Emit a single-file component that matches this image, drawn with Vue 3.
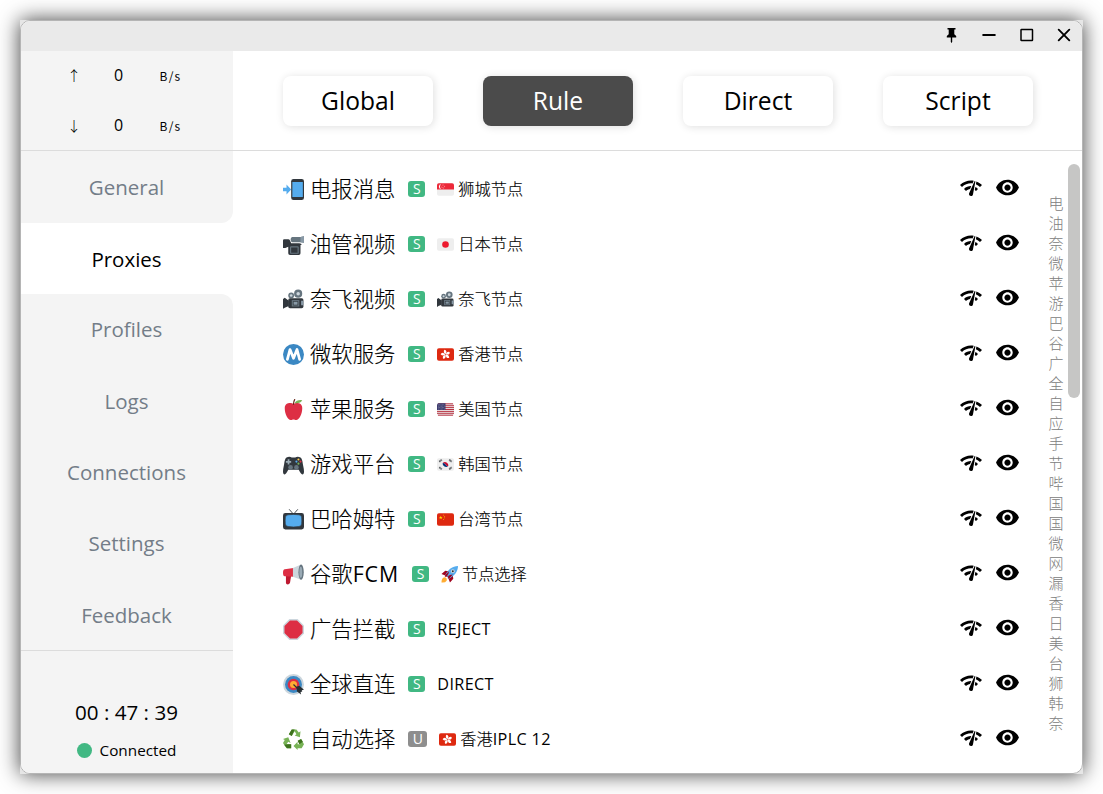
<script setup>
const modes = ['Global', 'Rule', 'Direct', 'Script']
const menu = ['General', 'Proxies', 'Profiles', 'Logs', 'Connections', 'Settings', 'Feedback']
const rows = [
  { icon: 'phone', name: '电报消息', tag: 'S', flag: 'sg', node: '狮城节点' },
  { icon: 'video', name: '油管视频', tag: 'S', flag: 'jp', node: '日本节点' },
  { icon: 'movie', name: '奈飞视频', tag: 'S', flag: 'movie', node: '奈飞节点' },
  { icon: 'metro', name: '微软服务', tag: 'S', flag: 'hk', node: '香港节点' },
  { icon: 'apple', name: '苹果服务', tag: 'S', flag: 'us', node: '美国节点' },
  { icon: 'game', name: '游戏平台', tag: 'S', flag: 'kr', node: '韩国节点' },
  { icon: 'tv', name: '巴哈姆特', tag: 'S', flag: 'cn', node: '台湾节点' },
  { icon: 'horn', name: '谷歌FCM', tag: 'S', flag: 'rocket', node: '节点选择' },
  { icon: 'stop', name: '广告拦截', tag: 'S', flag: '', node: 'REJECT' },
  { icon: 'target', name: '全球直连', tag: 'S', flag: '', node: 'DIRECT' },
  { icon: 'recycle', name: '自动选择', tag: 'U', flag: 'hk', node: '香港IPLC 12' }
]
const index = [...'电油奈微苹游巴谷广全自应手节哔国国微网漏香日美台狮韩奈']

// Splits a label into runs of Latin and Han characters, which are set in different weights
const runs = (s) => s.match(/[A-Z0-9 ]+|[^A-Z0-9 ]+/g)
const isLatin = (s) => /^[A-Z0-9 ]/.test(s)
</script>

<template>
  <div class="desktop">
    <svg class="defs" width="0" height="0">
      <symbol id="phone" viewBox="0 0 36 36">
        <path fill="#31373D" d="M14 4a4 4 0 0 1 4-4h14a4 4 0 0 1 4 4v28a4 4 0 0 1-4 4H18a4 4 0 0 1-4-4z" />
        <path fill="#55ACEE" d="M16 5h18v26H16zM0 15h6V9.5L14 18l-8 8.500V21H0z" />
      </symbol>
      <symbol id="video" viewBox="0 0 36 36">
        <path fill="#66757F" d="M16 5h14l6-1v11l-6-1H16q-3 0-3-4.500T16 5z" />
        <path fill="#8899A6" d="M30 5l6-1v11l-6-1z" />
        <path fill="#31373D" d="M0 11q0-2 2-2h7q2 0 3 2l2 5h14q4 0 4 3h-2v14q0 3-3 3H12q-3 0-3-3v-11l-5 2H0z" />
        <path fill="#66757F" d="M12 23q0-2 2-2h11q2 0 2 2v9q0 2-2 2H14q-2 0-2-2z" />
        <path fill="#31373D" d="M14 23h11v9H14z" />
      </symbol>
      <symbol id="movie" viewBox="0 0 36 36">
        <path fill="#31373D" d="M0 17l3-2 7 5v9l-7 3-3 2z" />
        <circle cx="14" cy="11" r="5" fill="#66757F" /><circle cx="26" cy="8" r="7" fill="#66757F" />
        <path fill="#31373D" d="M12 16h20q3 0 3 3v11q0 3-3 3H12q-3 0-3-3V19q0-3 3-3z" />
        <path fill="#66757F" d="M15 19h13v11H15z" /><path fill="#292F33" d="M17 21h9v7h-9z" />
        <circle cx="14" cy="11" r="2.200" fill="#CCD6DD" /><circle cx="26" cy="8" r="3" fill="#CCD6DD" />
        <path fill="#8899A6" d="M18 22h7v5h-7zM31 20h4v8h-4z" />
      </symbol>
      <symbol id="metro" viewBox="0 0 36 36">
        <circle cx="18" cy="18" r="18" fill="#3B88C3" />
        <path fill="none" stroke="#fff" stroke-width="4.700" stroke-linecap="round" stroke-linejoin="round" d="M7.500 26.500l4.500-17 6 15 6-15 4.500 17" />
      </symbol>
      <symbol id="apple" viewBox="0 0 36 36">
        <path fill="#DD2E44" d="M24 7c-3 0-3 1-6 1s-3-1-6-1c-4 0-9 2-9 9 0 11 6 20 10 20 3 0 3-1 5-1s2 1 5 1c4 0 10-9 10-20 0-7-5-9-9-9z" />
        <path fill="none" stroke="#662113" stroke-width="2" stroke-linecap="round" d="M18 9q0-5 2-8" />
        <path fill="#77B255" d="M20 7q3-6 13-5-3 6-13 5z" />
      </symbol>
      <symbol id="game" viewBox="0 0 36 36">
        <path fill="#31373D" d="M6 6q5-3 9 0h6q4-3 9 0 3 2 4 11 2 9 2 13 0 5-3 5-2 0-6-8H9q-4 8-6 8-3 0-3-5 0-4 2-13Q3 8 6 6z" />
        <circle cx="13" cy="23" r="4" fill="#66757F" /><circle cx="23" cy="23" r="4" fill="#66757F" />
        <path fill="#9AAAB4" d="M8 9h3v3h3v3h-3v3H8v-3H5v-3h3z" />
        <circle cx="26.500" cy="9.500" r="1.800" fill="#FFCC4D" /><circle cx="23" cy="13" r="1.800" fill="#55ACEE" />
        <circle cx="30" cy="13" r="1.800" fill="#DD2E44" /><circle cx="26.500" cy="16.500" r="1.800" fill="#77B255" />
      </symbol>
      <symbol id="tv" viewBox="0 0 36 36">
        <path fill="none" stroke="#31373D" stroke-width="1.500" stroke-linecap="round" d="M18 9L11 1M18 9l7-8" />
        <path fill="#31373D" d="M4 7h28q4 0 4 4v20q0 4-4 4H4q-4 0-4-4V11q0-4 4-4z" />
        <path fill="#55ACEE" stroke="#31373D" d="M9 10q9-1.500 18 0 5 0 5 5 .5 6 0 10 0 5-5 5-9 1.500-18 0-5 0-5-5-.5-5 0-10 0-5 5-5z" />
      </symbol>
      <symbol id="horn" viewBox="0 0 36 36">
        <path fill="#BE1931" d="M5 20h9l-2 12q-1 3-4 3-3 0-3-3z" />
        <path fill="#DD2E44" d="M3 9l15-2v15L3 21q-3 0-3-6 0-6 3-6z" />
        <path fill="#CCD6DD" d="M17 7L31 1q4 3 4 13t-4 13l-14-5z" />
        <ellipse cx="31" cy="14" rx="4.500" ry="13" fill="#66757F" /><ellipse cx="30.500" cy="14" rx="2.500" ry="9.500" fill="#99AAB5" />
      </symbol>
      <symbol id="stop" viewBox="0 0 36 36">
        <path fill="#CCD6DD" d="M11 0h14l11 11v14L25 36H11L0 25V11z" />
        <path fill="#DD2E44" d="M12 2.500h12l9.500 9.500v12L24 33.500H12L2.500 24V12z" />
      </symbol>
      <symbol id="target" viewBox="0 0 36 36">
        <circle cx="18" cy="18" r="18" fill="#CCD6DD" /><circle cx="18" cy="18" r="14.500" fill="#3B88C3" />
        <circle cx="18" cy="18" r="10" fill="#DD2E44" /><circle cx="18" cy="18" r="6" fill="#FFAC33" />
        <path stroke="#292F33" stroke-width="2" d="M18 18l10 10" />
        <path fill="#292F33" d="M23 22l5-2 8 7-4 1 1 2-3 1 1 4-7-5z" />
      </symbol>
      <symbol id="recycle" viewBox="0 0 36 36">
        <path fill="#77B255" d="M10 9l5-8h8l4 5 3-2-1 10-9-3 3-2-3-5-5 8zM9 14l4 10-4-2-3 4h8v7H6l-6-9 3-5-3-2zM31 17l5 9-4 7h-7v3l-7-7 7-7v4h4l-3-6z" />
        <path fill="#3E721D" d="M10 9l5-8h5l-5 11zM8 26h6v7H7l-5-6zM25 20l6-3 3 5-6 4z" />
      </symbol>
      <symbol id="rocket" viewBox="0 0 36 36">
        <path fill="#A0041E" d="M1 17l8-7 7 1-7 9zM19 35l7-8-1-7-9 7z" />
        <path fill="#FFAC33" d="M1 35q0-11 8-11 5 3 3 7-3 5-11 4z" />
        <path fill="#55ACEE" d="M36 0c-12 0-21 8-27 19l8 8C28 21 36 12 36 0z" />
        <path fill="#A0041E" d="M9 19l8-8-1 5-4 7 7-4 6-1-8 9-3-1 2-4-8 1z" />
        <circle cx="25" cy="11" r="4" fill="#CCD6DD" /><circle cx="25" cy="11" r="2" fill="#292F33" />
      </symbol>
      <symbol id="sg" viewBox="0 0 36 36">
        <rect y="5" width="36" height="26" rx="4" fill="#EEE" /><path fill="#ED2939" d="M4 5h28q4 0 4 4v9H0V9q0-4 4-4z" />
        <path fill="#fff" d="M9 7a5 5 0 1 0 0 10 6 6 0 0 1 0-10z" /><path fill="none" stroke="#fff" stroke-width="1.500" stroke-dasharray="1.500 2.500" d="M13 8l3 3-1.500 4H11l-1-4z" />
      </symbol>
      <symbol id="jp" viewBox="0 0 36 36">
        <rect y="5" width="36" height="26" rx="4" fill="#EEE" /><circle cx="18" cy="18" r="7" fill="#ED1B2F" />
      </symbol>
      <symbol id="hk" viewBox="0 0 36 36">
        <rect y="5" width="36" height="26" rx="4" fill="#DE2910" />
        <g fill="#fff">
          <path v-for="k in 5" :key="k" :transform="`rotate(${k * 72} 18 18)`" d="M17.500 17.500q-5-4-2-9.500 3.500 0 4.500 3.500 0 3-2.500 6z" />
        </g>
      </symbol>
      <symbol id="us" viewBox="0 0 36 36">
        <rect y="5" width="36" height="26" rx="4" fill="#EEE" />
        <path stroke="#B22334" stroke-width="2" d="M2 6h32M0 10h36M0 14h36M0 18h36M0 22h36M0 26h36M2 30h32" />
        <path fill="#3C3B6E" d="M4 5h14v14H0V9q0-4 4-4z" />
        <path stroke="#fff" stroke-width="1" stroke-dasharray="1 2" d="M2 8h15M3 11h14M2 14h15M3 17h14" />
      </symbol>
      <symbol id="kr" viewBox="0 0 36 36">
        <rect y="5" width="36" height="26" rx="4" fill="#EEE" />
        <path fill="#C60C30" d="M12 15a7 7 0 0 1 12 6q-3 2-6-3-3-4-6-3z" /><path fill="#003478" d="M12 15q3-1 6 3 3 5 6 3a7 7 0 0 1-12-6z" />
        <path stroke="#292F33" stroke-width="4" stroke-dasharray="1.200 .7" d="M5 12l5-4M26 8l5 4M5 24l5 4M26 28l5-4" />
      </symbol>
      <symbol id="cn" viewBox="0 0 36 36">
        <rect y="5" width="36" height="26" rx="4" fill="#DE2910" />
        <path fill="#FFDE02" d="M8 10l1 2.700h3l-2.400 1.800 1 2.900L8 15.600l-2.600 1.800 1-2.900L4 12.700h3zM13 8h1.500v1.500H13zM15.500 11H17v1.500h-1.500zM15.500 14H17v1.500h-1.500zM13 17h1.500v1.500H13z" />
      </symbol>
    </svg>

    <div class="frame">
      <div class="window">
        <header class="titlebar">
          <svg viewBox="0 0 20 20"><path d="M5.500 3h8v1.600h-1.200v4.700l1.900 1.700v1.500h-4V17l-.7 1-.7-1v-4.500h-4V11l1.900-1.700V4.600H5.500z" /></svg>
          <svg viewBox="0 0 20 20"><path class="line" d="M4.200 10h11.600" stroke-width="2" /></svg>
          <svg viewBox="0 0 20 20"><rect class="line" x="4" y="4.500" width="11.500" height="11" rx=".5" stroke-width="1.500" /></svg>
          <svg viewBox="0 0 20 20"><path class="line" d="M4.700 4.700l10.600 10.600M15.300 4.700L4.700 15.300" stroke-width="1.900" /></svg>
        </header>
        <div class="body">
          <aside>
            <div class="traffic">
              <div class="speed"><span class="arrow">↑</span><span class="num">0</span><span class="unit">B/s</span></div>
              <div class="speed"><span class="arrow">↓</span><span class="num">0</span><span class="unit">B/s</span></div>
            </div>
            <nav>
              <div v-for="(m, i) in menu" :key="m" class="item" :class="{ active: i === 1, above: i === 0, below: i === 2 }"><span>{{ m }}</span></div>
            </nav>
            <div class="status">
              <div class="clock">00 : 47 : 39</div>
              <div class="conn"><i></i><span>Connected</span></div>
            </div>
          </aside>
          <main>
            <div class="modes">
              <div v-for="m in modes" :key="m" class="mode" :class="{ on: m === 'Rule' }">{{ m }}</div>
            </div>
            <div class="content">
              <div class="list">
                <div v-for="r in rows" :key="r.name" class="row">
                  <svg class="emoji"><use :href="'#' + r.icon" /></svg>
                  <span class="name"><span v-for="t in runs(r.name)" :key="t" :class="{ latin: isLatin(t) }">{{ t }}</span></span>
                  <span class="tag" :class="{ auto: r.tag === 'U' }">{{ r.tag }}</span>
                  <svg v-if="r.flag" class="flag"><use :href="'#' + r.flag" /></svg>
                  <span class="node"><span v-for="t in runs(r.node)" :key="t" :class="{ latin: isLatin(t) }">{{ t }}</span></span>
                  <svg class="check" viewBox="0 0 24 24"><path d="M15.900 5c-.17 0-.32.09-.41.23l-.07.15-5.180 11.650c-.16.29-.26.61-.26.96 0 1.110.9 2.010 2.010 2.010.96 0 1.770-.68 1.960-1.590l.01-.03L16.400 5.500c0-.28-.22-.5-.5-.5zM1 9l2 2c2.880-2.880 6.790-4.080 10.530-3.620l1.190-2.680C9.890 3.840 4.740 5.270 1 9zm20 2l2-2c-1.640-1.640-3.550-2.820-5.590-3.570l-.53 2.820c1.500.62 2.900 1.530 4.120 2.750zm-4 4l2-2c-.8-.8-1.700-1.420-2.660-1.890l-.55 2.920c.42.27.83.59 1.210.97zM5 13l2 2c1.130-1.130 2.560-1.790 4.030-2l1.280-2.880c-2.630-.08-5.300.87-7.310 2.880z" /></svg>
                  <svg class="eye" viewBox="0 0 24 24"><path d="M12 4.500C7 4.500 2.730 7.610 1 12c1.730 4.390 6 7.500 11 7.500s9.270-3.110 11-7.500c-1.730-4.390-6-7.500-11-7.500zM12 17c-2.760 0-5-2.240-5-5s2.240-5 5-5 5 2.240 5 5-2.240 5-5 5zm0-8c-1.660 0-3 1.340-3 3s1.340 3 3 3 3-1.340 3-3-1.340-3-3-3z" /></svg>
                </div>
              </div>
              <div class="index"><span v-for="(c, i) in index" :key="i">{{ c }}</span></div>
              <div class="scroll"></div>
            </div>
          </main>
        </div>
      </div>
    </div>
  </div>
</template>

<style>
body { margin: 0; background: #fff; overflow: hidden; }
</style>

<style scoped>
* { box-sizing: border-box; }
.desktop { width: 1103px; height: 794px; padding: 20px; overflow: hidden; background: #fff; font-family: "Open Sans", "Noto Sans CJK SC", sans-serif; color: #000; }
.defs { display: block; height: 0; }
.frame { width: 1063px; height: 754px; background: #e6e6e6; box-shadow: 0 0 20px rgba(0, 0, 0, .75); }
.window { width: 1063px; height: 754px; border: 1px solid #b5b5b5; border-radius: 10px; overflow: hidden; background: #fff; display: flex; flex-direction: column; }
.titlebar { height: 30px; background: #eaeaea; display: flex; justify-content: flex-end; align-items: center; gap: 17.500px; padding: 0 8px 2px 0; flex: none; }
.titlebar svg { width: 20px; height: 20px; display: block; }
.line { fill: none; stroke: #000; stroke-linecap: round; }
.body { flex: 1; display: flex; min-height: 0; }
aside { width: 212px; flex: none; background: #f4f4f4; display: flex; flex-direction: column; }
.traffic { height: 100px; border-bottom: 1px solid #dcdcdc; flex: none; }
.speed { height: 50px; display: grid; grid-template-columns: 44px 45px 59px; padding: 0 0 2px 31px; align-items: center; text-align: center; }
.arrow { font: 300 14px "Noto Sans CJK SC", sans-serif; }
.num { font-size: 16px; }
.unit { font: 12px "Noto Sans CJK SC", sans-serif; letter-spacing: 1.200px; }
nav { height: 499px; flex: none; display: flex; flex-direction: column; background: #fff; }
.item { flex: 1; display: flex; align-items: center; justify-content: center; background: #f4f4f4; color: #737d88; font-size: 20.500px; padding: 1px 1px 0 0; }
.item.active { background: #fff; color: #000; flex: 0 0 71px; }
.item.above { border-bottom-right-radius: 12px; flex: 0 0 72px; padding-top: 0; }
.item.below { border-top-right-radius: 12px; padding-top: 0; }
.status { flex: 1; border-top: 1px solid #dcdcdc; display: flex; flex-direction: column; align-items: center; padding: 45px 1px 0 0; }
.clock { font-size: 20.600px; line-height: 32px; }
.conn { display: flex; align-items: center; gap: 8px; font-size: 15.300px; line-height: 20px; margin-top: 12px; }
.conn i { width: 15px; height: 15px; border-radius: 50%; background: #41b883; }
main { flex: 1; display: flex; flex-direction: column; min-width: 0; }
.modes { height: 100px; flex: none; border-bottom: 1px solid #dcdcdc; display: flex; gap: 50px; padding: 25px 0 0 50px; }
.mode { width: 150px; height: 50px; border-radius: 8px; display: flex; align-items: center; justify-content: center; font-size: 24.600px; padding-bottom: 2px; box-shadow: 1px 1px 8px rgba(0, 0, 0, .13); background: #fff; }
.mode.on { background: #4b4b4b; color: #fff; }
.content { flex: 1; display: flex; min-height: 0; padding-top: 11px; }
.list { width: 787px; padding-left: 50px; flex: none; }
.row { height: 55px; display: flex; align-items: center; }
.emoji { width: 21px; height: 21px; margin-right: 6px; flex: none; }
.name { font-size: 21.330px; font-weight: 300; line-height: 30px; padding-bottom: 2px; -webkit-text-stroke: .15px #000; }
.latin { font-weight: 400; letter-spacing: .35px; -webkit-text-stroke: 0; }
.name .latin { letter-spacing: .9px; }
.tag { width: 17px; height: 16px; border-radius: 3px; background: #41b883; color: #fff; font-size: 14px; line-height: 16px; text-align: center; margin: 0 12px 1px 13px; flex: none; }
.tag.auto { background: #8e8e8e; width: 19px; }
.flag { width: 17px; height: 17px; margin-right: 4px; flex: none; }
.node { font-size: 16.200px; font-weight: 300; line-height: 24px; padding-bottom: 2px; -webkit-text-stroke: .15px #000; }
.check { width: 24px; height: 24px; margin-left: auto; margin-bottom: 3px; }
.eye { width: 25px; height: 25px; margin: 0 0 4px 12.500px; }
.index { width: 24px; margin-left: 24px; padding-top: 31px; display: flex; flex-direction: column; align-items: center; flex: none; }
.index span { height: 20px; line-height: 20px; font-size: 15px; font-weight: 300; color: #808080; }
.scroll { margin: 2px 2px 0 auto; width: 14px; height: 234px; border-radius: 7px; background: #c6c6c5; }
</style>
